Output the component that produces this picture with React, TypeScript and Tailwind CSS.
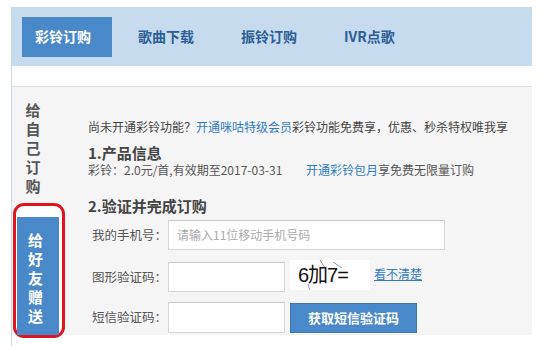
import React from "react";

const tabs = ["彩铃订购", "歌曲下载", "振铃订购", "IVR点歌"];

function Captcha() {
  return (
    <div className="relative w-[80px] h-[30px] bg-white flex items-center pl-[8px]">
      <span className="text-[20px] leading-none text-[#111] tracking-[-1px] font-['Liberation_Sans','Noto_Sans_CJK_SC',sans-serif]">
        6加7=
      </span>
      <svg className="absolute inset-0" width="80" height="30" viewBox="0 0 80 30">
        <line x1="30" y1="0" x2="35" y2="8" stroke="#555" strokeWidth="0.6" />
        <line x1="43" y1="2" x2="52" y2="8" stroke="#555" strokeWidth="0.6" />
        <line x1="18" y1="24" x2="20" y2="31" stroke="#555" strokeWidth="0.6" />
      </svg>
    </div>
  );
}

function Label({ children }: { children: React.ReactNode }) {
  return (
    <span className="w-[80px] pl-[4px] whitespace-nowrap text-[12.5px] text-[#555]">{children}</span>
  );
}

export default function App() {
  return (
    <div className="w-[556px] h-[346px] bg-white overflow-hidden pt-[7px] font-['Noto_Sans_CJK_SC',sans-serif]">
      <div className="ml-[11px] w-[521px] h-[339px] border-l border-[#cad7e6]">
        {/* tabs */}
        <div className="h-[59px] bg-[#c6dcee] flex items-center pl-[10px] gap-[13px]">
          {tabs.map((t, i) => (
            <div
              key={t}
              className={
                "w-[90px] h-[40px] flex items-center pl-[13px] text-[14px] font-bold " +
                (i === 0 ? "bg-[#4a89c9] text-white" : "text-[#2d5e96]")
              }
            >
              {t}
            </div>
          ))}
        </div>
        <div className="h-[21px] bg-white border-b border-[#dedede]" />
        {/* body */}
        <div className="h-[248px] bg-[#f5f5f5] flex">
          <div className="w-[76px] shrink-0 flex flex-col">
            <div className="pt-[13px] w-[46px] pr-[4px] flex flex-col items-center text-[15px] leading-[19px] font-bold text-[#555]">
              <span>给</span>
              <span>自</span>
              <span>己</span>
              <span>订</span>
              <span>购</span>
            </div>
            <div className="mt-[8px] ml-[1px] w-[52px] h-[138px] border-[3px] border-[#e0141e] rounded-[11px] bg-white pt-[11px] pl-[1px]">
              <div className="w-[42px] h-[118px] bg-[#4a89c9] flex flex-col items-center pt-[13px] pr-[5px] text-[15px] leading-[19px] font-bold text-white">
                <span>给</span>
                <span>好</span>
                <span>友</span>
                <span>赠</span>
                <span>送</span>
              </div>
            </div>
          </div>
          <div className="pt-[30px] text-[12px] text-[#444]">
            <div className="leading-[20px] whitespace-nowrap">
              尚未开通彩铃功能？<span className="text-[#2f7cc1]">开通咪咕特级会员</span>
              彩铃功能免费享，优惠、秒杀特权唯我享
            </div>
            <div className="mt-[7px] text-[15px] leading-[18px] font-bold text-[#444]">1.产品信息</div>
            <div className="leading-[16px] flex text-[#555] whitespace-nowrap">
              <span className="w-[218px]">彩铃：2.0元/首,有效期至2017-03-31</span>
              <span>
                <span className="text-[#2f7cc1]">开通彩铃包月</span>享免费无限量订购
              </span>
            </div>
            <div className="mt-[19px] text-[15px] leading-[18px] font-bold text-[#444]">2.验证并完成订购</div>
            <div className="mt-[5px] flex items-center">
              <Label>我的手机号：</Label>
              <div className="w-[277px] h-[30px] bg-white border border-[#d6d6d6] border-t-[#c8c8c8] flex items-center pl-[8px] text-[12px] text-[#aaa]">
                请输入11位移动手机号码
              </div>
            </div>
            <div className="mt-[12px] flex items-center">
              <Label>图形验证码：</Label>
              <div className="w-[117px] h-[30px] bg-white border border-[#d6d6d6] border-t-[#c8c8c8]" />
              <div className="ml-[5px] -mt-[4px]">
                <Captcha />
              </div>
              <span className="ml-[4px] -mt-[6px] text-[12px] text-[#2f7cc1] underline">看不清楚</span>
            </div>
            <div className="mt-[10px] flex items-center">
              <Label>短信验证码：</Label>
              <div className="w-[117px] h-[31px] bg-white border border-[#d6d6d6] border-t-[#c8c8c8]" />
              <div className="ml-[5px] w-[127px] h-[30px] bg-[#4a89c9] border border-[#3b77b5] flex items-center justify-center text-[13px] font-bold text-white">
                获取短信验证码
              </div>
            </div>
          </div>
        </div>
      </div>
    </div>
  );
}
